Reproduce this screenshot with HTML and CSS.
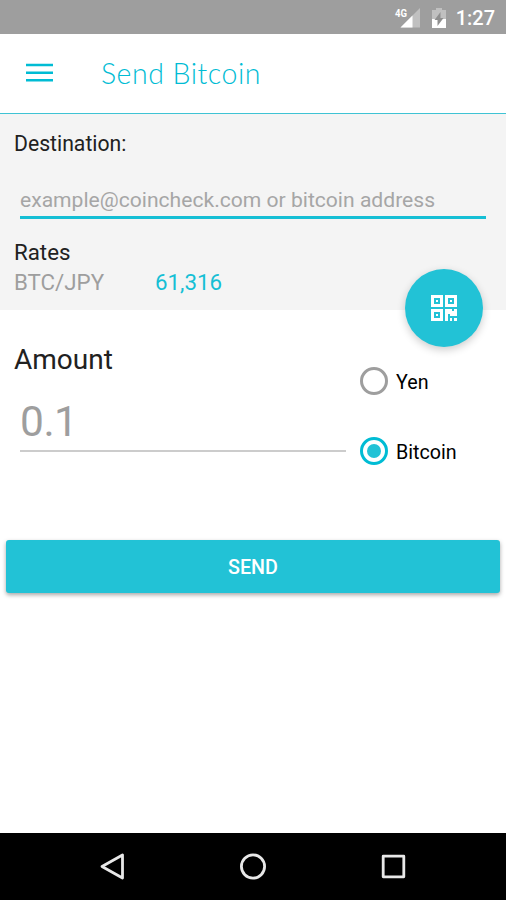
FILE: index.html
```html
<!DOCTYPE html>
<html lang="en">
<head>
<meta charset="utf-8">
<title>Send Bitcoin</title>
<link rel="stylesheet" href="styles.css">
</head>
<body>
<div class="screen">
  <div class="status">
    <svg class="signal" viewBox="0 0 28 24" width="28" height="24">
      <path d="M26 2V21.5H6.5Z" fill="#c0c0c0"/><path d="M18.5 9.5V21.5H6.5Z" fill="#fff"/>
      <text class="network" x="1" y="10.5" textLength="12" lengthAdjust="spacingAndGlyphs">4G</text>
    </svg>
    <svg class="battery" viewBox="0 0 14 20" width="14" height="20">
      <path d="M0 2H4V0H10V2H14V20H0Z" fill="#c0c0c0"/><path d="M0 11H14V20H0Z" fill="#fff"/><path d="M8.5 4V10H11.5L5.5 18V12H2.5Z" fill="#8f8f8f"/>
    </svg>
    <span class="clock">1:27</span>
  </div>
  <header class="toolbar">
    <svg class="menu" viewBox="0 0 27 19" width="27" height="19"><path d="M0 2H27M0 9.7H27M0 17.2H27" stroke="#00bcd4" stroke-width="2.5"/></svg>
    <h1 class="title">Send Bitcoin</h1>
  </header>
  <section class="destination">
    <div class="label">Destination:</div>
    <div class="address"><span class="hint">example@coincheck.com or bitcoin address</span></div>
    <div class="label rates">Rates</div>
    <div class="rate"><span class="pair">BTC/JPY</span><span class="price">61,316</span></div>
    <div class="fab">
      <svg viewBox="0 0 26 26" width="26" height="26">
        <path fill="#fff" fill-rule="evenodd" d="M0 0H12V12H0ZM3 3V9H9V3ZM5 5H7V7H5ZM14 0H26V12H14ZM17 3V9H23V3ZM19 5H21V7H19ZM0 14H12V26H0ZM3 17V23H9V17ZM5 19H7V21H5Z"/>
        <path fill="#fff" d="M14 14H21V16H23V14H26V21H19V19H17V26H14ZM19 23H21V26H19ZM23 23H26V26H23Z"/>
      </svg>
    </div>
  </section>
  <section class="amount">
    <div class="entry">
      <div class="heading">Amount</div>
      <div class="value"><span>0.1</span></div>
    </div>
    <div class="units">
      <div class="option"><i class="radio"></i><span class="yen">Yen</span></div>
      <div class="option"><i class="radio on"></i><span class="btc">Bitcoin</span></div>
    </div>
  </section>
  <div class="send"><span>SEND</span></div>
  <nav class="nav">
    <svg viewBox="0 0 28 28" width="28" height="28"><path d="M23.5 2V25L3 13.5Z"/></svg>
    <svg viewBox="0 0 28 28" width="28" height="28"><circle cx="14" cy="13.5" r="11.6"/></svg>
    <svg viewBox="0 0 28 28" width="28" height="28"><rect x="4.2" y="3.2" width="20.6" height="20.6"/></svg>
  </nav>
</div>
</body>
</html>
```
FILE: styles.css
```css
* { box-sizing: border-box; }
body { margin: 0; font-family: Roboto, sans-serif; background: #fff; }
svg { display: block; flex: none; }
.screen { width: 506px; height: 900px; display: flex; flex-direction: column; overflow: hidden; }
.status { height: 34px; background: #9e9e9e; display: flex; align-items: center; padding: 1px 11px 0 0; justify-content: flex-end; }
.signal { margin-right: 10px; }
.network { font: 700 11px Roboto, sans-serif; fill: #fff; }
.battery { margin-right: 10px; }
.clock { color: #fff; font-size: 20px; font-weight: 500; line-height: 30px; }
.toolbar { height: 80px; border-bottom: 1px solid #3fc3d4; display: flex; align-items: center; padding: 0 26px 2px; }
.menu { margin-right: 48px; }
.title { margin: 1px 0 0; font: 300 28.5px Lato, sans-serif; letter-spacing: .5px; color: #00bcd4; }
.destination { height: 196px; background: #f4f4f4; position: relative; padding: 16px 14px 0; color: #212121; }
.label { font-size: 21.2px; line-height: 28px; }
.address { margin: 12px 6px 0; height: 49px; border-bottom: 3px solid #15bfd5; padding-top: 16px; color: #a6a6a6; font-size: 21.1px; line-height: 28px; }
.rates { margin-top: 19px; font-size: 22.3px; }
.rate { display: flex; font-size: 22.3px; line-height: 32px; color: #9e9e9e; }
.pair { width: 141px; }
.price { color: #15bfd5; }
.fab { position: absolute; left: 405px; top: 155px; width: 78px; height: 78px; border-radius: 50%; background: #22c2d6; display: flex; align-items: center; justify-content: center; box-shadow: 0 3px 9px rgba(0,0,0,.2); }
.amount { height: 230px; display: flex; padding: 31px 14px 0; justify-content: space-between; }
.entry { width: 332px; }
.heading { font-size: 28px; line-height: 38px; color: #212121; }
.value { margin-left: 6px; height: 73px; border-bottom: 2px solid #ccc; font-size: 42.5px; line-height: 50px; padding-top: 18px; color: #9e9e9e; letter-spacing: -.5px; }
.units { width: 132px; padding-top: 26px; display: flex; flex-direction: column; gap: 42px; }
.option { display: flex; gap: 8px; align-items: center; height: 28px; font-size: 19.7px; line-height: 28px; color: #000; }
.option span { padding-top: 3px; }
.radio { flex: none; width: 28px; height: 28px; border: 3px solid #9e9e9e; border-radius: 50%; display: flex; align-items: center; justify-content: center; }
.on { border-color: #00bcd4; }
.on::after { content: ""; width: 14px; height: 14px; border-radius: 50%; background: #22c2d6; }
.send { margin: 0 6px; padding-top: 2px; height: 53px; border-radius: 3px; background: #22c2d6; color: #fff; font-size: 19.7px; font-weight: 500; display: flex; align-items: center; justify-content: center; box-shadow: 0 2px 4px rgba(0,0,0,.35); }
.nav { margin-top: auto; height: 67px; background: #000; display: flex; justify-content: space-between; align-items: center; padding: 0 99px; }
.nav svg { fill: none; stroke: #e8e8e8; stroke-width: 2.8; stroke-linejoin: round; }
```
